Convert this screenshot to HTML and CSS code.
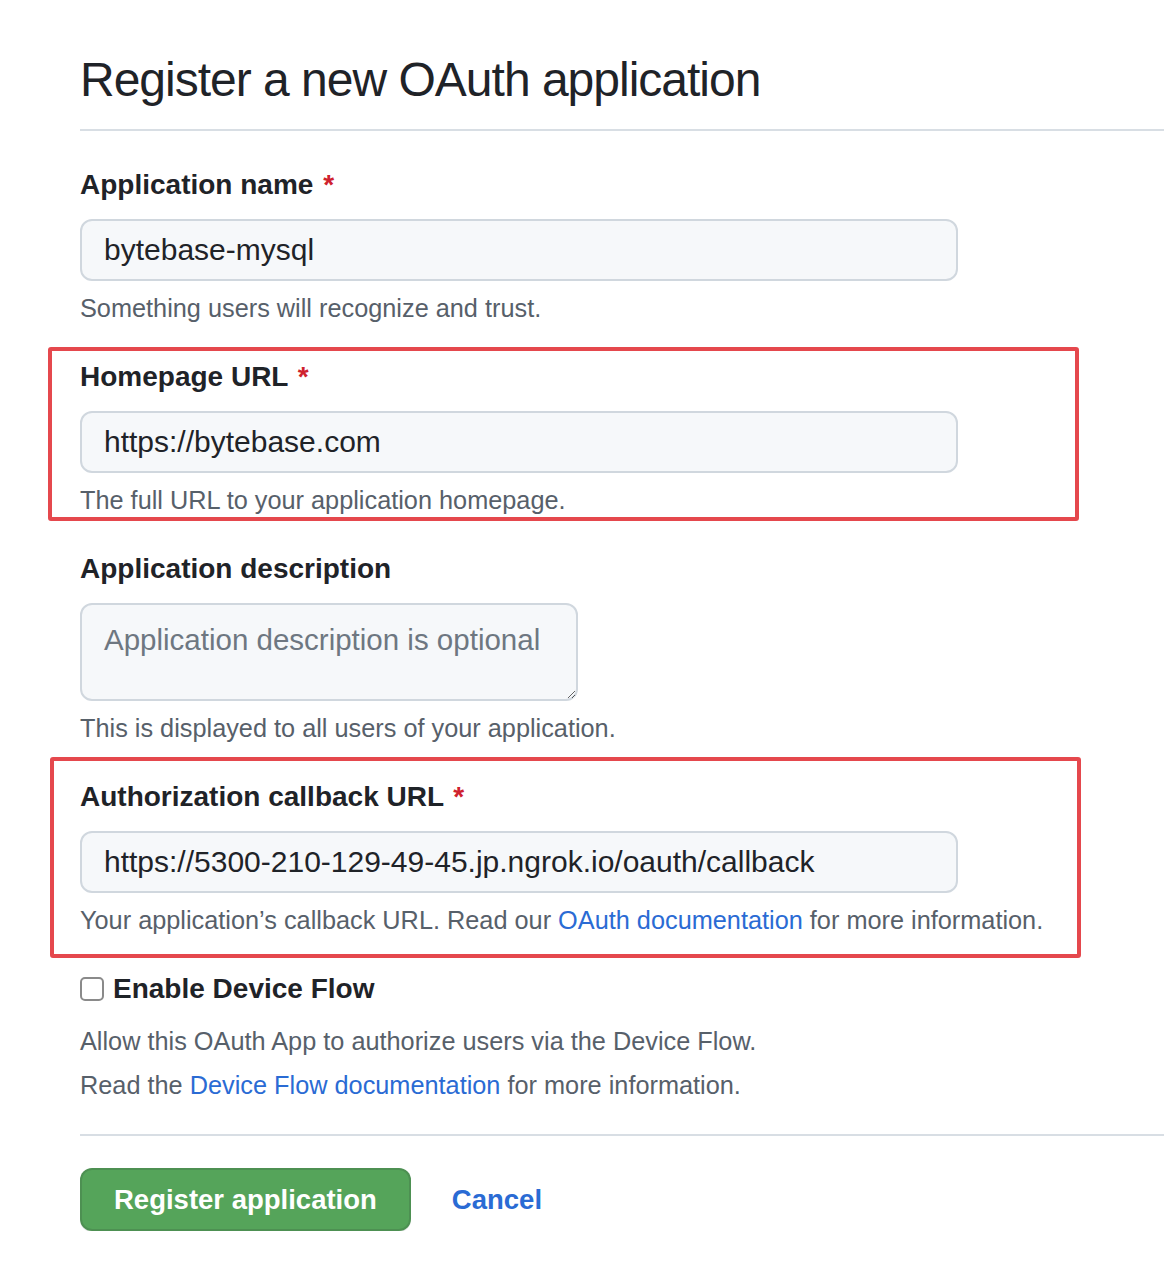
FILE: index.html
```html
<!DOCTYPE html>
<html lang="en">
<head>
<meta charset="utf-8">
<title>Register a new OAuth application</title>
<link rel="stylesheet" href="styles.css">
</head>
<body>
<main class="page">
  <h1 class="title">Register a new OAuth application</h1>
  <form class="form">
    <div class="group group-first">
      <label class="label">Application name <span class="req">*</span></label>
      <input class="field" type="text" value="bytebase-mysql">
      <p class="note">Something users will recognize and trust.</p>
    </div>

    <div class="group marked marked-one">
      <label class="label">Homepage URL <span class="req">*</span></label>
      <input class="field" type="text" value="https://bytebase.com">
      <p class="note">The full URL to your application homepage.</p>
    </div>

    <div class="group group-desc">
      <label class="label">Application description</label>
      <textarea class="area" placeholder="Application description is optional"></textarea>
      <p class="note">This is displayed to all users of your application.</p>
    </div>

    <div class="group marked marked-two">
      <label class="label">Authorization callback URL <span class="req">*</span></label>
      <input class="field" type="text" value="https://5300-210-129-49-45.jp.ngrok.io/oauth/callback">
      <p class="note">Your application’s callback URL. Read our <a class="link" href="#">OAuth documentation</a> for more information.</p>
    </div>

    <label class="check-row"><input class="check" type="checkbox"><span>Enable Device Flow</span></label>
    <p class="note note-allow">Allow this OAuth App to authorize users via the Device Flow.</p>
    <p class="note note-read">Read the <a class="link" href="#">Device Flow documentation</a> for more information.</p>

    <div class="actions">
      <button class="btn" type="button">Register application</button>
      <a class="cancel" href="#">Cancel</a>
    </div>
  </form>
</main>
</body>
</html>
```

FILE: styles.css
```css
html, body {
  margin: 0;
  padding: 0;
  background: #ffffff;
}

body {
  font-family: "Liberation Sans", Arial, sans-serif;
  color: #1f2328;
  overflow: hidden;
}

.page {
  padding: 50px 0 0 80px;
}

.title {
  margin: 0;
  font-size: 48px;
  font-weight: 400;
  letter-spacing: -1px;
  line-height: 60px;
  padding-bottom: 19px;
  border-bottom: 2px solid #d8dee4;
  color: #1f2328;
}

.form {
  display: flex;
  flex-direction: column;
  align-items: flex-start;
}

.group {
  display: flex;
  flex-direction: column;
  align-items: flex-start;
}

.group-first {
  margin-top: 33px;
}

.label {
  font-size: 28px;
  font-weight: 700;
  line-height: 42px;
  margin-bottom: 13px;
  color: #1f2328;
}

.req {
  color: #cf222e;
  margin-left: 2px;
}

.field {
  box-sizing: border-box;
  width: 878px;
  height: 62px;
  margin: 0;
  padding: 0 22px;
  font-family: "Liberation Sans", Arial, sans-serif;
  font-size: 30px;
  color: #1f2328;
  background: #f6f8fa;
  border: 2px solid #d0d7de;
  border-radius: 12px;
  outline: none;
}

.area {
  box-sizing: border-box;
  width: 498px;
  height: 98px;
  margin: 0;
  padding: 13px 22px;
  font-family: "Liberation Sans", Arial, sans-serif;
  font-size: 29.5px;
  line-height: 44px;
  color: #1f2328;
  background: #f6f8fa;
  border: 2px solid #d0d7de;
  border-radius: 12px;
  outline: none;
  resize: both;
  display: block;
}

.area::placeholder {
  color: #6e7781;
}

.note {
  margin: 11px 0 0 0;
  font-size: 25.3px;
  line-height: 32px;
  color: #57606a;
}

.link {
  color: #2a6bd4;
  text-decoration: none;
}

.marked {
  box-sizing: border-box;
  border: 4px solid #e5484d;
  border-radius: 3px;
}

.marked-one {
  margin-top: 23px;
  margin-left: -32px;
  width: 1031px;
  padding: 5px 0 1px 28px;
}

.group-desc {
  margin-top: 27px;
}

.marked-two {
  margin-top: 13px;
  margin-left: -30px;
  width: 1031px;
  padding: 15px 0 18px 26px;
}

.check-row {
  margin-top: 10px;
  display: flex;
  align-items: center;
  font-size: 28px;
  font-weight: 700;
  line-height: 42px;
  color: #1f2328;
}

.check {
  appearance: none;
  -webkit-appearance: none;
  box-sizing: border-box;
  width: 24px;
  height: 24px;
  margin: 0 9px 0 0;
  border: 2px solid #8a8a8a;
  border-radius: 5px;
  background: #ffffff;
}

.note-allow {
  margin-top: 15px;
}

.note-read {
  margin-top: 12px;
}

.actions {
  align-self: stretch;
  margin-top: 33px;
  padding-top: 32px;
  border-top: 2px solid #d8dee4;
  display: flex;
  align-items: center;
  gap: 41px;
}

.btn {
  box-sizing: border-box;
  height: 63px;
  padding: 0 32px;
  font-family: "Liberation Sans", Arial, sans-serif;
  font-size: 27.5px;
  font-weight: 700;
  color: #ffffff;
  background: #55a45a;
  border: 2px solid rgba(31, 35, 40, 0.15);
  border-radius: 12px;
  box-shadow: 0 1px 0 rgba(31, 35, 40, 0.1);
}

.cancel {
  font-size: 27.5px;
  font-weight: 700;
  color: #2a6bd4;
  text-decoration: none;
}
```
